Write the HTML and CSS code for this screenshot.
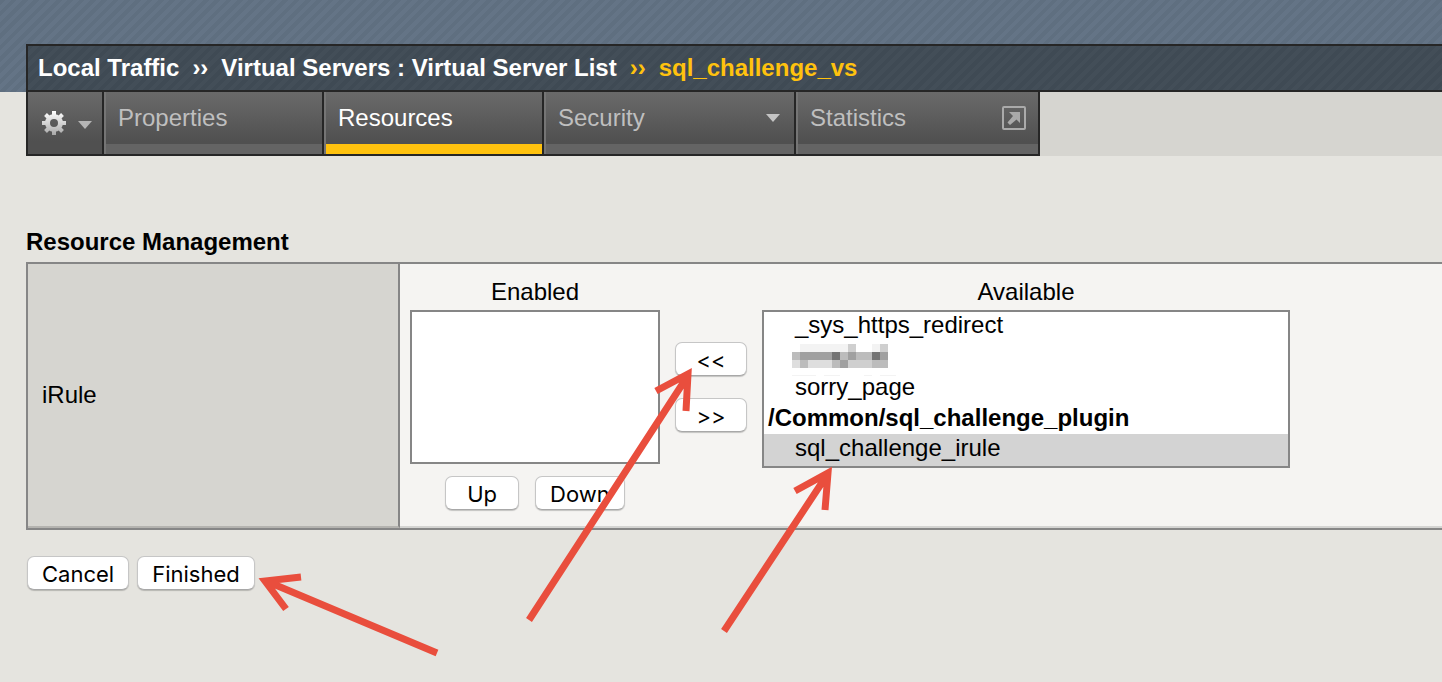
FILE: index.html
```html
<!DOCTYPE html>
<html lang="en">
<head>
<meta charset="utf-8">
<meta name="viewport" content="width=device-width, initial-scale=1">
<title>Virtual Server List: sql_challenge_vs</title>
<link rel="stylesheet" href="styles.css">
</head>
<body>
<header class="masthead">
  <nav class="crumbs" aria-label="Breadcrumb">
    <a href="#">Local Traffic</a><span class="sep">››</span><a href="#">Virtual Servers : Virtual Server List</a><span class="sep current">››</span><span class="current">sql_challenge_vs</span>
  </nav>
</header>
<div class="tabbar">
  <nav class="tabs" aria-label="Sections">
    <button class="gear" type="button" aria-label="Options">
      <svg width="26" height="26" viewBox="-13 -13 26 26" aria-hidden="true">
        <defs>
          <linearGradient id="metal" x1="0" y1="-12" x2="0" y2="12" gradientUnits="userSpaceOnUse">
            <stop offset="0" stop-color="#fff"/><stop offset="1" stop-color="#a8a8a8"/>
          </linearGradient>
        </defs>
        <g stroke="url(#metal)" fill="none">
          <circle r="6.500" stroke-width="5"/>
          <path stroke-width="4" d="M.01-12L0-7M0 7L.01 12M-12 .01L-7 0M7 0L12 .01M-8.500-8.500l3 3M5.500 5.500l3 3M8.500-8.500l-3 3M-5.500 5.500l-3 3"/>
        </g>
      </svg>
      <svg width="14" height="8" viewBox="0 0 14 8" aria-hidden="true"><path d="M0 0H14L7 8Z" fill="#b5b5b5"/></svg>
    </button>
    <a class="tab" href="#">Properties</a>
    <a class="tab active" href="#" aria-current="page">Resources</a>
    <a class="tab wide" href="#">Security
      <svg width="14" height="8" viewBox="0 0 14 8" aria-hidden="true"><path d="M0 0H14L7 8Z" fill="#c4c4c4"/></svg>
    </a>
    <a class="tab last" href="#">Statistics
      <svg width="24" height="24" viewBox="0 0 24 24" aria-hidden="true"><rect x="1" y="1" width="22" height="22" rx="1" fill="none" stroke="#aaa" stroke-width="2"/><path d="M7 6H18V17L14.500 13.500L8 19L5.500 16.500L11 10Z" fill="#aaa"/></svg>
    </a>
  </nav>
</div>
<main class="content">
  <h1 class="title">Resource Management</h1>
  <section class="panel">
    <div class="name">iRule</div>
    <div class="picker">
      <div class="column">
        <label for="enabled">Enabled</label>
        <select class="list enabled" id="enabled" size="5" multiple></select>
        <div class="order"><button class="btn" type="button">Up</button><button class="btn" type="button">Down</button></div>
      </div>
      <div class="movers"><button class="btn" type="button">&lt;&lt;</button><button class="btn" type="button">&gt;&gt;</button></div>
      <div class="column">
        <label for="available">Available</label>
        <div class="listwrap">
          <select class="list available" id="available" size="5" multiple>
            <option>_sys_https_redirect</option>
            <option aria-label="Hidden">&nbsp;</option>
            <option>sorry_page</option>
            <optgroup label="/Common/sql_challenge_plugin">
              <option selected>sql_challenge_irule</option>
            </optgroup>
          </select>
          <svg class="mosaic" width="120" height="34" viewBox="0 0 120 34" shape-rendering="crispEdges" aria-hidden="true">
            <path fill="#f3f3f3" d="M8 0h32v8H8zM40 0h16v8H40zM80 0h8v8H80zM0 31h24v1H0zM32 31h16v1H32zM72 31h8v1h-8zM88 31h16v1H88z"/>
            <path fill="#cfcfcf" d="M56 0h8v8h-8zM88 0h8v8h-8zM56 16h24v8H56z"/>
            <path fill="#dedede" d="M0 16h8v8H0zM16 16h24v8H16z"/>
            <path fill="#bcbcbc" d="M0 8h8v8H0zM8 16h8v8H8zM40 16h8v8h-8zM48 8h8v8h-8zM64 8h16v8H64zM80 16h16v8H80z"/>
            <path fill="#a0a0a0" d="M8 8h32v8H8zM56 8h8v8h-8zM48 16h8v8h-8zM88 8h8v8h-8z"/>
            <path fill="#747474" d="M40 8h8v8h-8zM80 8h8v8h-8z"/>
          </svg>
        </div>
      </div>
    </div>
  </section>
  <div class="actions"><button class="btn" type="button">Cancel</button><button class="btn" type="button">Finished</button></div>
</main>
<svg class="arrows" width="640" height="320" viewBox="240 360 640 320" fill="none" stroke="#e94e3d" stroke-width="7" aria-hidden="true">
  <path d="M529 620L687 377M656 391L688 374L686 411M724 631L827 475M795 491L828 473L825 510M437 653L266 581M301 577L265 581L286 609"/>
</svg>
</body>
</html>
```
FILE: styles.css
```css
* { box-sizing: border-box; }
body {
  margin: 0;
  background: #e5e4df;
  color: #000;
  font: 24px/28px "Liberation Sans", Arial, sans-serif;
}
.masthead {
  padding: 44px 0 0 26px;
  background: repeating-linear-gradient(135deg, #5f6f80 0 4px, #647486 4px 8px);
}
.crumbs {
  display: flex;
  height: 48px;
  padding: 8px 10px;
  border: 2px solid #262626;
  border-right: 0;
  background: repeating-linear-gradient(135deg, #3f4a54 0 4px, #434e58 4px 8px);
  color: #fff;
  font-weight: bold;
  white-space: nowrap;
}
.crumbs a { color: inherit; text-decoration: none; }
.sep { margin: 0 13px; }
.crumbs .current { color: #ffc20e; }
.tabbar {
  margin-left: 26px;
  background: #d6d5d0;
}
.tabs {
  display: flex;
  width: max-content;
  height: 64px;
  border: 2px solid #262626;
  border-top: 0;
}
.gear {
  display: flex;
  align-items: center;
  gap: 11px;
  width: 74px;
  padding: 0 0 0 13px;
  border: 0;
  background: linear-gradient(#6a6a6a, #505050 80%);
}
.gear svg:last-child { margin-top: 4px; }
.tab {
  display: flex;
  justify-content: space-between;
  width: 220px;
  padding: 12px 12px 0 14px;
  border-left: 2px solid #262626;
  box-shadow: inset 2px 0 #757575, inset 0 -10px #646464;
  background: linear-gradient(#6a6a6a, #505050 80%);
  color: #bfbfbf;
  text-decoration: none;
}
.tab.active { box-shadow: inset 2px 0 #757575, inset 0 -10px #ffc20e; color: #fff; }
.tab.wide { width: 252px; padding-right: 14px; }
.tab.wide svg { margin-top: 10px; }
.tab.last { width: 244px; }
.tab.last svg { margin-top: 2px; }
.content { padding: 72px 0 0 26px; }
.title { margin: 0 0 6px; font-size: 24px; line-height: 28px; }
.panel {
  display: grid;
  grid-template-columns: 372px 1fr;
  border: 2px solid #868686;
  border-right: 0;
  background: #f5f4f2;
}
.name {
  display: flex;
  align-items: center;
  padding-left: 14px;
  border-right: 2px solid #868686;
  border-bottom: 2px solid #b4b3af;
  background: #d6d5d0;
}
.picker {
  display: flex;
  padding: 14px 10px 16px;
  border-bottom: 2px solid #d4d4d2;
}
.column { display: flex; flex-direction: column; }
.column label { margin-bottom: 4px; text-align: center; }
.list {
  display: block;
  padding: 0;
  border: 2px solid #868686;
  border-radius: 0;
  outline: 0;
  overflow: hidden;
  background: #fff;
  font: inherit;
}
.enabled { width: 250px; height: 154px; }
.available { width: 528px; height: 158px; }
.list option {
  min-height: 28px;
  padding: 0 0 3px 31px;
  color: #000;
  line-height: 28px;
  text-indent: 0;
}
.list optgroup { padding: 0; font-weight: bold; line-height: 29px; text-indent: 2px; }
.list optgroup option { padding-bottom: 4px; font-weight: normal; }
.list optgroup option::before { content: none; }
.list option:checked { background: #d3d3d3 linear-gradient(#d3d3d3, #d3d3d3); color: #000; }
.listwrap { position: relative; }
.mosaic { position: absolute; left: 30px; top: 34px; }
.order { display: flex; justify-content: center; gap: 16px; margin-top: 12px; }
.movers {
  display: flex;
  flex-direction: column;
  gap: 22px;
  padding: 64px 15px 0;
}
.movers .btn { width: 72px; }
.btn {
  height: 34px;
  padding: 2px 14px 0;
  border: 1px solid #c6c6c6;
  border-bottom-color: #a8a8a8;
  border-radius: 7px;
  box-shadow: 0 1px 1px #0003;
  background: #fff;
  color: #000;
  font: 22px/28px Inter, sans-serif;
}
.order .btn:first-child { padding: 2px 21px 0; }
.actions { display: flex; gap: 8px; padding: 26px 0 90px 1px; }
.arrows { position: absolute; left: 240px; top: 360px; pointer-events: none; }
```
